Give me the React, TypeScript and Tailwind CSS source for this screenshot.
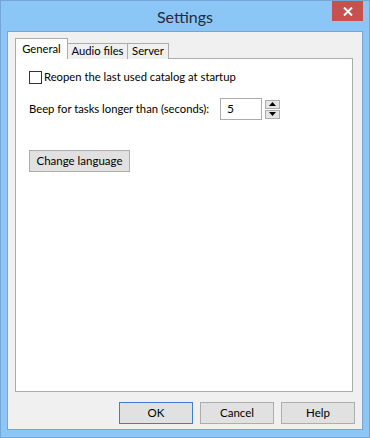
import { useState } from "react";

const font = { fontFamily: 'Lato, "Noto Sans", sans-serif' };

const DlgButton = ({ label, primary = false }: { label: string; primary?: boolean }) => (
  <button
    className={`h-[22px] w-[74px] bg-[#e1e1e1] text-[11.5px] text-black border ${
      primary ? "border-[#3c7fd1]" : "border-[#adadad]"
    }`}
  >
    {label}
  </button>
);

const App = () => {
  const [reopen, setReopen] = useState(false);
  const [beep, setBeep] = useState(5);

  return (
    <div
      className="w-[370px] h-[438px] bg-[#8bc6f7] border border-[#74a6d6] flex flex-col overflow-hidden whitespace-nowrap"
      style={font}
    >
      {/* Title bar */}
      <div className="h-[30px] relative flex items-center justify-center">
        <span className="text-[16px] text-[#2a2a3a] pt-[1px]">Settings</span>
        <button className="absolute right-[6px] top-0 w-[31px] h-[20px] bg-[#c75050] flex items-center justify-center">
          <svg width="10" height="9" viewBox="0 0 10 9">
            <path d="M1 0.5 L9 8.5 M9 0.5 L1 8.5" stroke="white" strokeWidth="2" />
          </svg>
        </button>
      </div>

      {/* Client area */}
      <div className="flex-1 mx-[6px] mb-[7px] bg-[#f0f0f0] border border-[#77a5d3] flex flex-col px-[7px] pt-[6px]">
        {/* Tabs */}
        <div className="flex items-end h-[21px] text-[11.25px] text-black relative z-10">
          <div className="h-[21px] w-[53px] bg-white border border-[#acacac] border-b-0 flex items-center justify-center">
            General
          </div>
          <div className="h-[16px] w-[60px] bg-[#f0f0f0] border border-[#acacac] border-l-0 border-b-0 flex items-center justify-center">
            Audio files
          </div>
          <div className="h-[16px] w-[41px] bg-[#f0f0f0] border border-[#acacac] border-l-0 border-b-0 flex items-center justify-center">
            Server
          </div>
        </div>

        {/* Tab panel */}
        <div className="h-[334px] -mt-[1px] mr-[2px] bg-white border border-[#acacac] pl-[13px] pt-[11px] text-[11.25px] text-black">
          <label className="flex items-center gap-[2px] h-[14px] cursor-default">
            <span
              className="w-[13px] h-[13px] border border-[#333] bg-white"
              onClick={() => setReopen(!reopen)}
            >
              {reopen && (
                <svg width="11" height="11" viewBox="0 0 11 11">
                  <path d="M2 5.5 L4.5 8 L9 2.5" stroke="#222" strokeWidth="1.5" fill="none" />
                </svg>
              )}
            </span>
            <span>Reopen the last used catalog at startup</span>
          </label>

          <div className="flex items-center mt-[14px] h-[22px]">
            <span className="w-[191px]">Beep for tasks longer than (seconds):</span>
            <div className="w-[42px] h-[22px] border border-[#acacac] bg-white flex items-center pl-[6px] text-[12px]">
              {beep}
            </div>
            <div className="ml-[3px] flex flex-col gap-[1px]">
              <button
                className="w-[15px] h-[9px] bg-[#e5e5e5] border border-[#adadad] flex items-center justify-center"
                onClick={() => setBeep(beep + 1)}
              >
                <svg width="7" height="4" viewBox="0 0 7 4">
                  <path d="M3.5 0 L7 4 L0 4 Z" fill="#000" />
                </svg>
              </button>
              <button
                className="w-[15px] h-[9px] bg-[#e5e5e5] border border-[#adadad] flex items-center justify-center"
                onClick={() => setBeep(Math.max(0, beep - 1))}
              >
                <svg width="7" height="4" viewBox="0 0 7 4">
                  <path d="M0 0 L7 0 L3.5 4 Z" fill="#000" />
                </svg>
              </button>
            </div>
          </div>

          <button className="mt-[30px] h-[22px] w-[101px] bg-[#e1e1e1] border border-[#adadad] text-[11.5px]">
            Change language
          </button>
        </div>

        {/* Dialog buttons */}
        <div className="flex justify-end gap-[7px] mt-[10px]">
          <DlgButton label="OK" primary />
          <DlgButton label="Cancel" />
          <DlgButton label="Help" />
        </div>
      </div>
    </div>
  );
};

export default App;
